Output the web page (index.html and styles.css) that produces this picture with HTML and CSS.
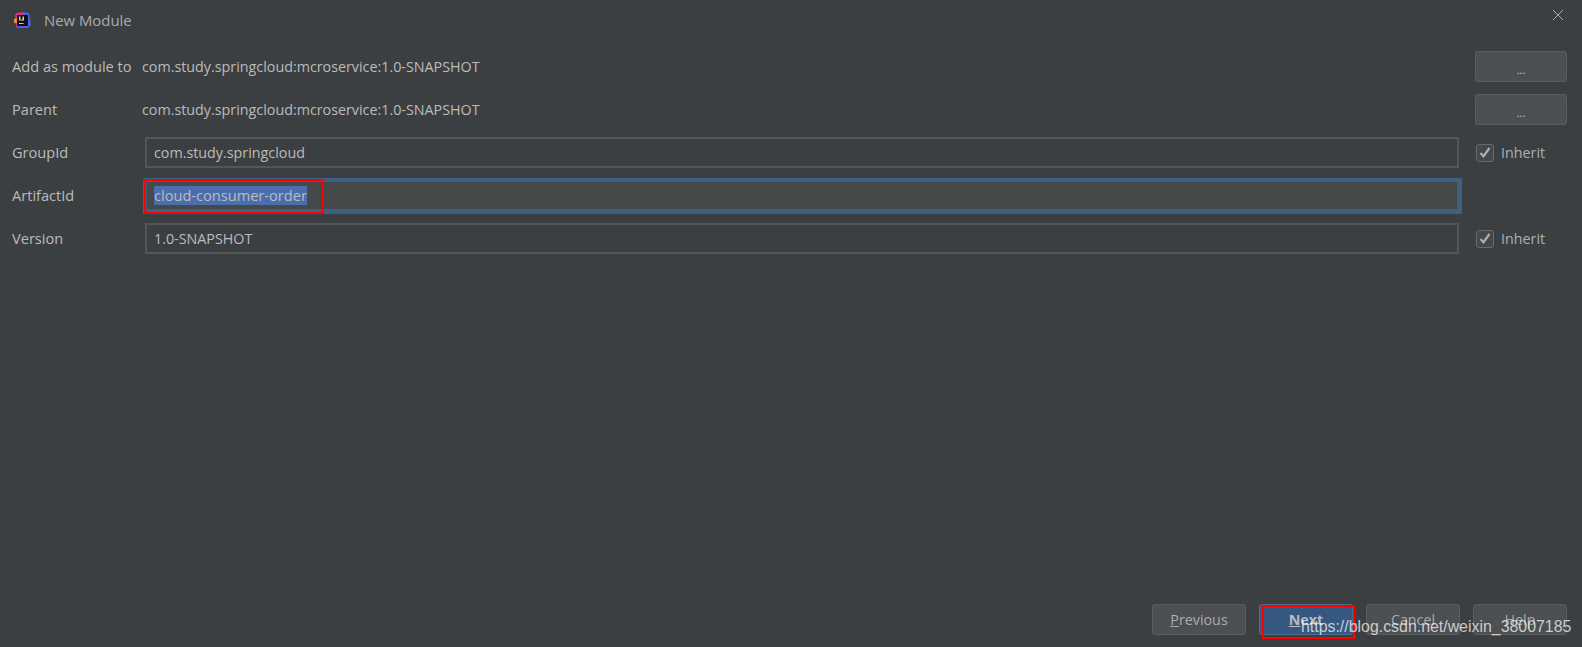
FILE: index.html
```html
<!DOCTYPE html>
<html lang="en">
  <head>
    <meta charset="UTF-8" />
    <title>New Module</title>
    <link rel="stylesheet" href="styles.css">
  </head>
  <body>
    <div class="dialog">
      <!-- Title bar -->
      <div class="titlebar">
        <svg class="logo" width="17" height="17" viewBox="0 0 17 17">
          <path d="M2 1l7-1 2 3H2z" fill="#ef2d5e" />
          <path d="M9 0l6 1 2 12-3 3H4l5-16z" fill="#4a62e4" />
          <path d="M1 3l3-2v15l-2-1z" fill="#cf2f9f" />
          <path d="M0 7l3-1v5l-3 0z" fill="#f7892b" />
          <rect x="3" y="3" width="11" height="11" fill="#111" />
          <rect x="5" y="4.5" width="1.5" height="4" fill="#ccc" />
          <rect x="8.5" y="4.5" width="1.5" height="4" fill="#ccc" />
          <rect x="7" y="7.5" width="2" height="1" fill="#ccc" />
          <rect x="5" y="11" width="4.5" height="1" fill="#ccc" />
        </svg>
        <span class="title">New Module</span>
        <svg class="close" width="10" height="10" viewBox="0 0 10 10">
          <path d="M0 0l10 10M10 0L0 10" stroke="#a9abad" stroke-width="1" fill="none" />
        </svg>
      </div>

      <!-- Form -->
      <form class="form">
        <label>Add as module to</label>
        <div class="value">com.study.springcloud:mcroservice:1.0-SNAPSHOT</div>
        <button type="button" class="btn dots">...</button>

        <label>Parent</label>
        <div class="value">com.study.springcloud:mcroservice:1.0-SNAPSHOT</div>
        <button type="button" class="btn dots">...</button>

        <label>GroupId</label>
        <div class="field">com.study.springcloud</div>
        <div class="inherit"><span class="check"><svg width="12" height="11" viewBox="0 0 12 11"><path d="M1.5 6l3 3.2L10.5 1" stroke="#aeb0b2" stroke-width="2.2" fill="none" /></svg></span>Inherit</div>

        <label>ArtifactId</label>
        <div class="field focused"><span class="selected">cloud-consumer-order</span></div>
        <div></div>

        <label>Version</label>
        <div class="field">1.0-SNAPSHOT</div>
        <div class="inherit"><span class="check"><svg width="12" height="11" viewBox="0 0 12 11"><path d="M1.5 6l3 3.2L10.5 1" stroke="#aeb0b2" stroke-width="2.2" fill="none" /></svg></span>Inherit</div>
      </form>

      <!-- Buttons -->
      <div class="footer">
        <button type="button" class="btn"><u>P</u>revious</button>
        <button type="button" class="btn primary"><u>N</u>ext</button>
        <button type="button" class="btn">Cancel</button>
        <button type="button" class="btn">Help</button>
      </div>
    </div>

    <!-- Annotations on top of the screenshot -->
    <div class="mark mark-field"></div>
    <div class="mark mark-next"></div>
    <div class="watermark">https://blog.csdn.net/weixin_38007185</div>
  </body>
</html>
```

FILE: styles.css
```css
* {
  box-sizing: border-box;
}

html,
body {
  margin: 0;
  padding: 0;
  height: 647px;
  overflow: hidden;
}

body {
  position: relative;
  background-color: #3c3f41;
  color: #bbbbbb;
  font-family: "Open Sans", sans-serif;
  font-size: 14.3px;
}

.dialog {
  display: flex;
  flex-direction: column;
  height: 647px;
}

.titlebar {
  display: flex;
  align-items: center;
  height: 41px;
  padding: 0 19px 0 14px;
}

.logo {
  flex-shrink: 0;
}

.title {
  margin-left: 13px;
  margin-bottom: 2px;
  color: #a9abad;
  font-size: 14.9px;
}

.close {
  margin-left: auto;
  margin-top: -12px;
}

.form {
  display: grid;
  grid-template-columns: 133px 1fr 92px;
  grid-auto-rows: 31px;
  row-gap: 12px;
  align-items: center;
  margin-top: 10px;
  padding: 0 15px 0 12px;
}

.form label {
  margin-bottom: 2px;
  font-size: 14.6px;
  white-space: nowrap;
}

.value {
  margin-left: -3px;
}

.field {
  height: 31px;
  margin-right: 16px;
  padding-left: 7px;
  line-height: 27px;
  border: 2px solid #535556;
  color: #bbbbbb;
}

.field.focused {
  display: flex;
  align-items: center;
  background: #45494a;
  border-color: #3d6185;
  box-shadow: 1px 0 0 2px #3d6185, 0 1px 0 2px #3d6185;
  font-size: 14.6px;
}

.selected {
  height: 19px;
  line-height: 18px;
  background: #4b6eaf;
}

.inherit {
  display: flex;
  align-items: center;
  margin-left: 1px;
  color: #a4b0ba;
}

.check {
  display: flex;
  align-items: center;
  justify-content: center;
  width: 18px;
  height: 18px;
  margin-right: 7px;
  border: 1px solid #6b6b6b;
  border-radius: 3px;
  background: #43494a;
}

.btn {
  width: 94px;
  height: 31px;
  padding: 0;
  background: #4c5052;
  border: 1px solid #5a5e60;
  border-radius: 3px;
  color: #a9abad;
  font-family: "Open Sans", sans-serif;
  font-size: 14.3px;
}

.dots {
  width: 92px;
  height: 31px;
  padding-top: 6px;
  font-size: 11px;
  color: #c5c8ca;
}

.primary {
  background: #365880;
  border-color: #4c708c;
  color: #bbbbbb;
  font-weight: 700;
}

.footer {
  display: flex;
  justify-content: flex-end;
  gap: 13px;
  margin-top: auto;
  padding: 0 15px 12px 0;
}

.mark {
  position: absolute;
  border: 2px solid #ff0000;
}

.mark-field {
  left: 144px;
  top: 179px;
  width: 180px;
  height: 35px;
}

.mark-next {
  left: 1262px;
  top: 605px;
  width: 93px;
  height: 34px;
}

.watermark {
  position: absolute;
  left: 1301px;
  top: 618px;
  font-family: "Liberation Sans", sans-serif;
  font-size: 15.9px;
  color: rgba(255, 255, 255, 0.72);
  white-space: nowrap;
}
```
